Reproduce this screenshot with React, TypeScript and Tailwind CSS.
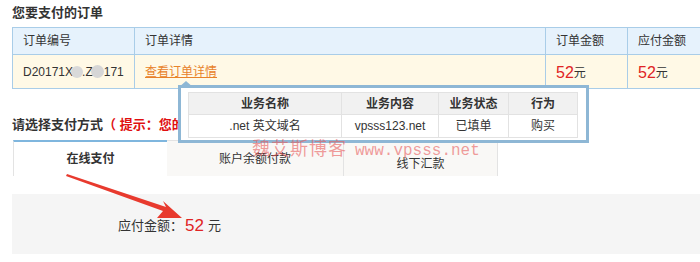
import React from 'react';

const font = { fontFamily: '"Liberation Sans", "Noto Sans CJK SC", sans-serif' };

export default function App() {
  const subRows = [['.net 英文域名', 'vpsss123.net', '已填单', '购买']];

  return (
    <div className="relative w-[700px] h-[262px] overflow-hidden bg-white text-[#333]" style={font}>
      {/* order title */}
      <div className="h-[27px] pl-[12px] pt-[4px] text-[13px] font-bold leading-[18px]">您要支付的订单</div>

      {/* order table */}
      <div className="ml-[12px] w-[700px] border-t border-b border-l border-[#a9cde8] text-[12px]">
        <div className="flex h-[27px] bg-[#e6f2fc] border-b border-[#a9cde8]">
          <div className="w-[122px] border-r border-[#a9cde8] pl-[10px] flex items-center">订单编号</div>
          <div className="w-[411px] border-r border-[#a9cde8] pl-[10px] flex items-center">订单详情</div>
          <div className="w-[82px] border-r border-[#a9cde8] pl-[10px] flex items-center">订单金额</div>
          <div className="flex-1 pl-[10px] flex items-center">应付金额</div>
        </div>
        <div className="flex h-[33px] bg-[#fff9e6]">
          <div className="w-[122px] border-r border-[#a9cde8] pl-[10px] flex items-center">
            <span>D20171X</span>
            <span className="inline-block w-[12px] h-[12px] rounded-full bg-[#d9d9d9] -ml-[2px]" />
            <span className="-ml-[1px]">.Z</span>
            <span className="inline-block w-[13px] h-[13px] rounded-full bg-[#d6d6d6] -ml-[2px]" />
            <span>171</span>
          </div>
          <div className="w-[411px] border-r border-[#a9cde8] pl-[10px] flex items-center">
            <span className="text-[#e8822a] underline">查看订单详情</span>
          </div>
          <div className="w-[82px] border-r border-[#a9cde8] pl-[10px] flex items-end pb-[6px]">
            <span className="text-[16px] text-[#e02424] leading-[18px]">52</span>
            <span className="text-[12px]">元</span>
          </div>
          <div className="flex-1 pl-[10px] flex items-end pb-[6px]">
            <span className="text-[16px] text-[#e02424] leading-[18px]">52</span>
            <span className="text-[12px]">元</span>
          </div>
        </div>
      </div>

      {/* payment method */}
      <div className="mt-[27px] h-[24px] pl-[12px] text-[13px] font-bold leading-[18px]">
        请选择支付方式<span className="text-[#e01010]">（ 提示：您的</span>
      </div>

      <div className="ml-[13px] flex h-[36px] text-[12px]">
        <div className="w-[154px] border-t-2 border-l border-[#7fb6de] border-l-[#e3e3e3] bg-white flex items-center justify-center font-bold">
          在线支付
        </div>
        <div className="w-[177px] border-t border-r border-[#e3e3e3] bg-[#f9f8f6] flex items-center justify-center">
          账户余额付款
        </div>
        <div className="w-[154px] border-t border-r border-[#e3e3e3] bg-[#f9f8f6] flex items-center justify-center pt-[10px]">
          线下汇款
        </div>
      </div>

      <div className="mt-[18px] ml-[12px] h-[60px] bg-[#f5f5f5] flex items-center pl-[106px] pt-[4px] text-[13px]">
        <span>应付金额：</span>
        <span className="text-[17px] text-[#e02424] ml-[2px]">52</span>
        <span className="ml-[4px]">元</span>
      </div>

      {/* order details popup */}
      <div className="absolute left-[178px] top-[85px] w-[411px] h-[58px] border-[3px] border-[#8eb7d5] bg-white pl-[7px] pt-[4px]">
        <div className="absolute -top-[7px] left-[-3px] w-0 h-0 border-l-[8px] border-r-[8px] border-b-[7px] border-l-transparent border-r-transparent border-b-[#8eb7d5]" />
        <div className="w-[390px] border border-[#e2e2e2] text-[12px]">
          <div className="flex h-[22px] bg-[#f1f1f1] font-bold border-b border-[#e2e2e2]">
            <div className="w-[153px] border-r border-[#e2e2e2] flex items-center justify-center">业务名称</div>
            <div className="w-[97px] border-r border-[#e2e2e2] flex items-center justify-center">业务内容</div>
            <div className="w-[70px] border-r border-[#e2e2e2] flex items-center justify-center">业务状态</div>
            <div className="flex-1 flex items-center justify-center">行为</div>
          </div>
          {subRows.map((r) => (
            <div key={r[1]} className="flex h-[22px]">
              <div className="w-[153px] border-r border-[#e2e2e2] flex items-center justify-center">{r[0]}</div>
              <div className="w-[97px] border-r border-[#e2e2e2] flex items-center justify-center">{r[1]}</div>
              <div className="w-[70px] border-r border-[#e2e2e2] flex items-center justify-center">{r[2]}</div>
              <div className="flex-1 flex items-center justify-center">{r[3]}</div>
            </div>
          ))}
        </div>
      </div>

      {/* watermark */}
      <div className="absolute left-[252px] top-[134px] flex items-baseline text-[rgba(232,90,90,0.6)] pointer-events-none">
        <span className="text-[18px] tracking-[1px]" style={{ fontFamily: '"Noto Sans CJK SC", serif' }}>魏艾斯博客</span>
        <span className="ml-[8px] text-[16px]" style={{ fontFamily: '"Liberation Mono", monospace' }}>www.vpsss.net</span>
      </div>

      {/* red arrow */}
      <svg className="absolute left-0 top-0 pointer-events-none" width="700" height="262">
        <polygon points="67,174 166,207 163,201 182,218 157,218 163,211 66,176" fill="#e83a2e" />
      </svg>
    </div>
  );
}
